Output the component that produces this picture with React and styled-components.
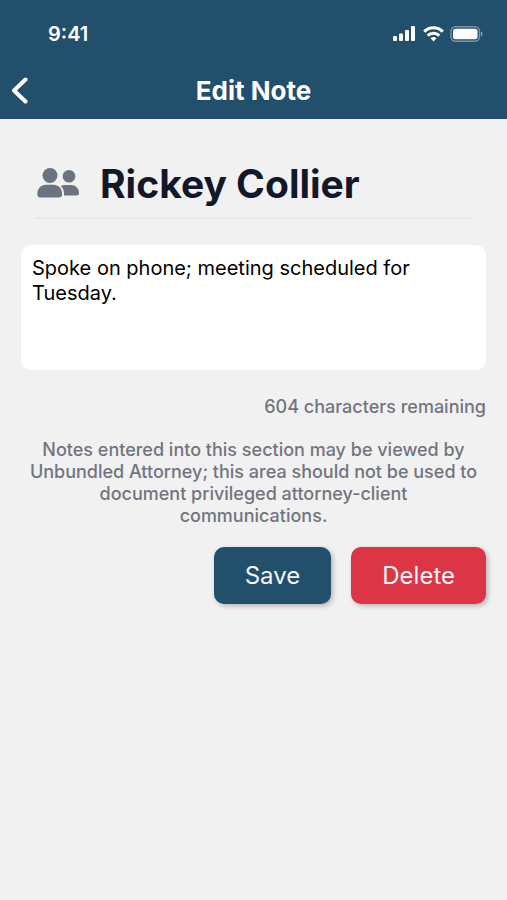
import React, { useState } from "react";
import styled, { createGlobalStyle } from "styled-components";

const GlobalStyle = createGlobalStyle`
  * {
    box-sizing: border-box;
  }

  body {
    margin: 0;
    background-color: #f1f1f1;
    font-family: "Inter", sans-serif;
  }
`;

const Header = styled.header`
  padding-bottom: 12px;
  background-color: #224f6b;
  color: #ffffff;
`;

const StatusBar = styled.div`
  display: flex;
  align-items: center;
  justify-content: space-between;
  height: 67px;
  padding: 0 24px 0 48px;
`;

const Time = styled.span`
  font-size: 20px;
  font-weight: 600;
`;

const StatusIcons = styled.div`
  display: flex;
  align-items: center;
  gap: 6px;
`;

const NavBar = styled.nav`
  display: grid;
  grid-template-columns: 40px 1fr 40px;
  align-items: center;
  padding-top: 8px;
`;

const BackButton = styled.button`
  display: flex;
  padding: 0 0 0 10px;
  border: none;
  background: none;
  color: inherit;
  cursor: pointer;
`;

const Title = styled.h1`
  margin: 0;
  font-size: 26px;
  font-weight: 700;
  line-height: 32px;
  text-align: center;
`;

const Main = styled.main`
  padding: 38px 21px;
`;

const Contact = styled.div`
  display: flex;
  align-items: center;
  gap: 21px;
  margin: 0 14px 26px;
  padding-bottom: 6px;
  border-bottom: 2px solid #e9e9eb;
`;

const Name = styled.h2`
  margin: 0;
  color: #12172a;
  font-size: 39px;
  font-weight: 700;
  line-height: 54px;
`;

const NoteInput = styled.textarea`
  display: block;
  width: 100%;
  height: 125px;
  padding: 11px;
  border: none;
  border-radius: 10px;
  outline: none;
  background-color: #ffffff;
  color: #000000;
  font-family: inherit;
  font-size: 20px;
  line-height: 25px;
  resize: none;
`;

const Remaining = styled.p`
  margin: 26px 0 21px;
  color: #71757f;
  font-size: 18px;
  font-weight: 500;
  line-height: 22px;
  text-align: right;
`;

const Notice = styled.p`
  margin: 0 0 20px;
  padding: 0 5px;
  color: #71757f;
  font-size: 18px;
  font-weight: 500;
  line-height: 22px;
  text-align: center;
`;

const Actions = styled.div`
  display: flex;
  justify-content: flex-end;
  gap: 20px;
`;

const Button = styled.button`
  height: 57px;
  padding: 0 31px;
  border: none;
  border-radius: 10px;
  background-color: ${(props) => (props.$danger ? "#dc3545" : "#224f6b")};
  box-shadow: 2px 2px 5px rgba(0, 0, 0, 0.25);
  color: #f4f6f8;
  font-family: inherit;
  font-size: 24px;
  cursor: pointer;
`;

const SignalIcon = () => (
  <svg width="24" height="16" viewBox="0 0 24 16" fill="currentColor" aria-hidden="true">
    <rect x="0" y="10" width="4" height="5" rx="1" />
    <rect x="6" y="7.5" width="4" height="7.5" rx="1" />
    <rect x="12" y="4" width="4" height="11" rx="1" />
    <rect x="18" y="0" width="4" height="15" rx="1" />
  </svg>
);

const WifiIcon = () => (
  <svg width="21" height="16" viewBox="0 0 21 16" fill="none" stroke="currentColor" strokeWidth="3" aria-hidden="true">
    <path d="M1.2 5.6a13.2 13.2 0 0 1 18.6 0" />
    <path d="M4.7 9.6a8.2 8.2 0 0 1 11.6 0" />
    <path d="M10.5 15.5l-3-3.2a4.4 4.4 0 0 1 6 0z" fill="currentColor" stroke="none" />
  </svg>
);

const BatteryIcon = () => (
  <svg width="33" height="16" viewBox="0 0 33 16" aria-hidden="true">
    <rect x="1" y="0.7" width="28.500" height="14.600" rx="4.500" fill="none" stroke="#ffffff" strokeWidth="1.400" strokeOpacity="0.4" />
    <rect x="3" y="2.7" width="24.500" height="10.600" rx="2.500" fill="#ffffff" />
    <path d="M31 5.500c2 1 2 4 0 5z" fill="#ffffff" fillOpacity="0.5" />
  </svg>
);

const BackIcon = () => (
  <svg width="18" height="28" viewBox="0 0 18 28" fill="none" stroke="currentColor" strokeWidth="4" strokeLinecap="round" strokeLinejoin="round" aria-hidden="true">
    <path d="M15.500 2.500L4 13.500l11.500 11" />
  </svg>
);

const PeopleIcon = () => (
  <svg width="44" height="32" viewBox="0 0 44 32" fill="#6b7280" aria-hidden="true">
    <circle cx="15" cy="7.500" r="7.500" />
    <path d="M2.300 26c0-5.500 3.700-9.300 8.700-9.300h7.500c5 0 8.700 3.800 8.700 9.300 0 2.300-1 3.500-3 3.500H5.300c-2 0-3-1.200-3-3.500z" />
    <circle cx="34" cy="8.300" r="6.300" />
    <path d="M29 27.500c.3-4-.7-7.500-3.200-9.500 1.200-.7 2.700-1 4.200-1h6c4.500 0 8 3.300 8 8 0 1.700-.8 2.500-2.500 2.500z" />
  </svg>
);

const MAX_LENGTH = 650;

const App = () => {
  const [note, setNote] = useState("Spoke on phone; meeting scheduled for Tuesday.");

  return (
    <>
      <GlobalStyle />
      <Header>
        <StatusBar>
          <Time>9:41</Time>
          <StatusIcons>
            <SignalIcon />
            <WifiIcon />
            <BatteryIcon />
          </StatusIcons>
        </StatusBar>
        <NavBar>
          <BackButton aria-label="Back">
            <BackIcon />
          </BackButton>
          <Title>Edit Note</Title>
        </NavBar>
      </Header>
      <Main>
        <Contact>
          <PeopleIcon />
          <Name>Rickey Collier</Name>
        </Contact>
        <NoteInput
          aria-label="Note"
          maxLength={MAX_LENGTH}
          value={note}
          onChange={(e) => setNote(e.target.value)}
        />
        <Remaining>{MAX_LENGTH - note.length} characters remaining</Remaining>
        <Notice>
          Notes entered into this section may be viewed by Unbundled Attorney; this area should not
          be used to document privileged attorney-client communications.
        </Notice>
        <Actions>
          <Button>Save</Button>
          <Button $danger>Delete</Button>
        </Actions>
      </Main>
    </>
  );
};

export default App;
